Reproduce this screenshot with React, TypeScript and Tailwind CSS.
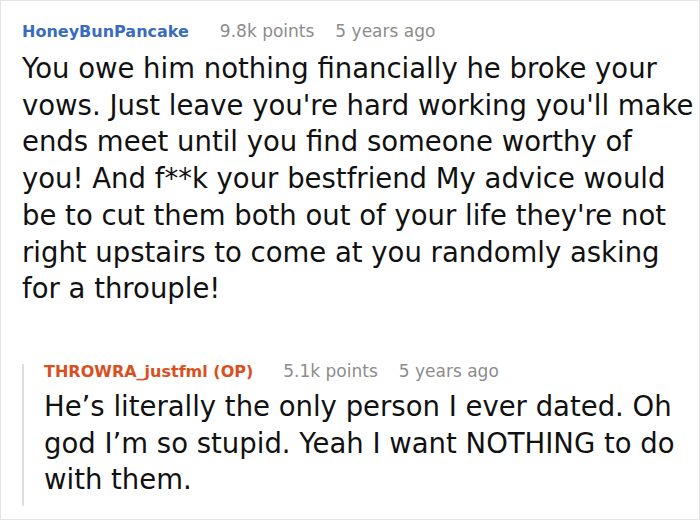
import React from 'react';

const Meta: React.FC<{ name: string; color: string; points: string; age: string; gap: string }> = ({ name, color, points, age, gap }) => (
  <div className="flex items-baseline text-[16px] leading-[22px]">
    <span className={`font-bold ${color}`}>{name}</span>
    <span className={`${gap} text-[17px] text-[#8c8c8c]`}>{points}</span>
    <span className="ml-[21px] text-[17px] text-[#8c8c8c]">{age}</span>
  </div>
);

const Lines: React.FC<{ lines: string[]; top: string }> = ({ lines, top }) => (
  <p className={`${top} whitespace-nowrap text-[27.5px] leading-[36.7px] text-[#111]`}>
    {lines.map((l, i) => (
      <span key={i} className="block">{l}</span>
    ))}
  </p>
);

const App: React.FC = () => {
  return (
    <div
      className="w-[700px] h-[520px] bg-white border border-[#e4e4e4] overflow-hidden"
      style={{ fontFamily: '"DejaVu Sans", Verdana, sans-serif' }}
    >
      <div className="pl-[21px] pt-[19px]">
        <Meta name="HoneyBunPancake" color="text-[#3a6cbd]" points="9.8k points" age="5 years ago" gap="ml-[31px]" />
        <Lines
          top="mt-[7px]"
          lines={[
            'You owe him nothing financially he broke your',
            "vows. Just leave you're hard working you'll make",
            'ends meet until you find someone worthy of',
            'you! And f**k your bestfriend My advice would',
            "be to cut them both out of your life they're not",
            'right upstairs to come at you randomly asking',
            'for a throuple!',
          ]}
        />

        <div className="mt-[53px] flex">
          {/* thread line */}
          <div className="w-[2px] shrink-0 bg-[#dedede] mt-[4px]" />
          <div className="pl-[20px] pb-[8px] shrink-0">
            <Meta name="THROWRA_justfml (OP)" color="text-[#d9501e]" points="5.1k points" age="5 years ago" gap="ml-[30px]" />
            <Lines
              top="mt-[5px]"
              lines={[
                'He’s literally the only person I ever dated. Oh',
                'god I’m so stupid. Yeah I want NOTHING to do',
                'with them.',
              ]}
            />
          </div>
        </div>
      </div>
    </div>
  );
};

export default App;
